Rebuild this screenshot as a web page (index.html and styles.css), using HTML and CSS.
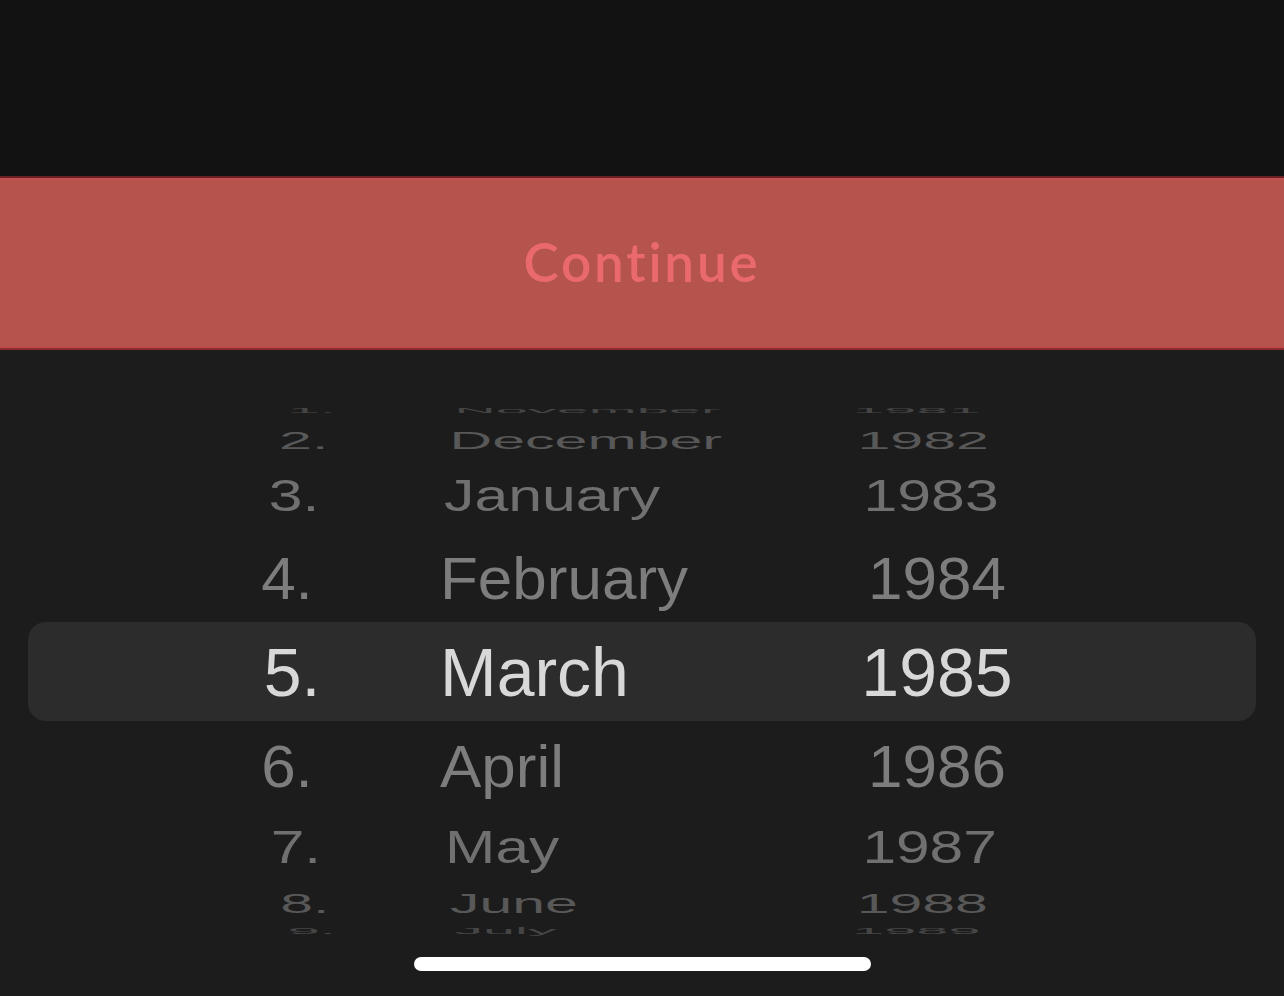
FILE: index.html
```html
<!DOCTYPE html>
<html lang="en">
<head>
    <meta charset="UTF-8">
    <meta name="viewport" content="width=device-width, initial-scale=1.0">
    <title>Birth date</title>
    <link rel="stylesheet" href="styles.css">
</head>
<body>

<div class="top"></div>

<div class="continue">
    <span class="continue-label">Continue</span>
</div>

<div class="picker">
    <div class="wheel">
        <div class="row r-4"><span class="num">1.</span><span class="month">November</span><span class="year">1981</span></div>
        <div class="row r-3"><span class="num">2.</span><span class="month">December</span><span class="year">1982</span></div>
        <div class="row r-2"><span class="num">3.</span><span class="month">January</span><span class="year">1983</span></div>
        <div class="row r-1"><span class="num">4.</span><span class="month">February</span><span class="year">1984</span></div>
        <div class="row selected"><span class="num">5.</span><span class="month">March</span><span class="year">1985</span></div>
        <div class="row r1"><span class="num">6.</span><span class="month">April</span><span class="year">1986</span></div>
        <div class="row r2"><span class="num">7.</span><span class="month">May</span><span class="year">1987</span></div>
        <div class="row r3"><span class="num">8.</span><span class="month">June</span><span class="year">1988</span></div>
        <div class="row r4"><span class="num">9.</span><span class="month">July</span><span class="year">1989</span></div>
    </div>
    <div class="home-indicator"></div>
</div>

</body>
</html>
```

FILE: styles.css
```css
body {
    margin: 0;
    background-color: #121212;
    font-family: "Liberation Sans", Arial, sans-serif;
    overflow: hidden;
}
.top {
    height: 176px;
}
.continue {
    height: 174px;
    box-sizing: border-box;
    display: flex;
    justify-content: center;
    align-items: center;
    background-color: #b5534d;
    border-top: 2px solid #6a2124;
    border-bottom: 2px solid #8a2b2c;
    box-shadow: inset 0 2px 0 #c4504f, inset 0 -2px 0 #be4a49;
}
.continue-label {
    font-family: Lato, "Noto Sans", sans-serif;
    font-weight: 600;
    font-size: 53px;
    letter-spacing: 2.8px;
    color: #ea6a6c;
    padding-bottom: 4px;
}
.picker {
    height: 646px;
    box-sizing: border-box;
    padding-top: 46px;
    background-color: #1c1c1c;
    display: flex;
    flex-direction: column;
    align-items: center;
}
.wheel {
    width: 100%;
    display: flex;
    flex-direction: column;
}
/* line-height kept tiny so the glyphs stay centred in the short rows */
.row {
    margin: 0 28px;
    padding-left: 204px;
    display: grid;
    grid-template-columns: 120px 428px 314px;
    align-items: center;
    font-size: 62px;
    line-height: 10px;
    white-space: nowrap;
    color: #7c7c7c;
    transform-origin: center;
}
.num {
    text-align: center;
    padding-right: 10px;
}
.month {
    padding-left: 88px;
}
.year {
    text-align: center;
}
.selected {
    height: 99px;
    font-size: 68px;
    color: #d8d8d8;
    background-color: #2c2c2c;
    border-radius: 18px;
}
.selected .num {
    padding-right: 0;
}
.r-4 { height: 29px; color: #454545; transform: scale(0.93, 0.11); }
.r-3 { height: 31px; color: #585858; transform: scale(0.953, 0.4); }
.r-2 { height: 79px; color: #707070; transform: scale(0.98, 0.72); }
.r-1 { height: 87px; color: #7d7d7d; transform: scale(1, 0.97); }
.r1 { height: 91px; color: #7d7d7d; transform: scale(1, 0.95); }
.r2 { height: 71px; color: #707070; transform: scale(0.975, 0.74); }
.r3 { height: 41px; color: #585858; transform: scale(0.95, 0.45); }
.r4 { height: 13px; color: #454545; transform: scale(0.93, 0.14); }
.home-indicator {
    width: 457px;
    height: 14px;
    margin-top: 20px;
    border-radius: 7px;
    background-color: #fff;
}
```
